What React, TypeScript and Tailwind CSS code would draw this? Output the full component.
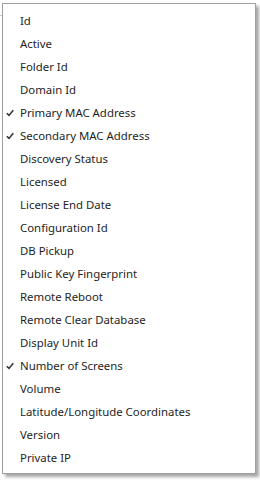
import React from "react";

const items: [string, boolean][] = [
  ["Id", false],
  ["Active", false],
  ["Folder Id", false],
  ["Domain Id", false],
  ["Primary MAC Address", true],
  ["Secondary MAC Address", true],
  ["Discovery Status", false],
  ["Licensed", false],
  ["License End Date", false],
  ["Configuration Id", false],
  ["DB Pickup", false],
  ["Public Key Fingerprint", false],
  ["Remote Reboot", false],
  ["Remote Clear Database", false],
  ["Display Unit Id", false],
  ["Number of Screens", true],
  ["Volume", false],
  ["Latitude/Longitude Coordinates", false],
  ["Version", false],
  ["Private IP", false],
];

function Check() {
  return (
    <svg width="8" height="8" viewBox="0 0 8 8" className="absolute left-[3px] top-[8px]">
      <path d="M0.8 4.2 L3 6.4 L7.3 1.2" fill="none" stroke="#333" strokeWidth="1.6" />
    </svg>
  );
}

export default function App() {
  return (
    <div className="relative w-[260px] h-[480px] bg-white overflow-hidden">
      <div className="absolute left-0 top-[15px] w-[3px] h-px bg-[#c8c8c8]" />
      <div className="absolute left-[2px] top-[3px] w-[254px] h-[471px] border border-[#a0a0a0] bg-white pt-[5px] pb-[4px] shadow-[3px_3px_3px_rgba(0,0,0,0.35)] font-['Segoe_UI','Noto_Sans',sans-serif] text-[11.4px] text-[#1e1e1e]">
        {items.map(([label, checked]) => (
          <div key={label} className="relative h-[23px] flex items-center pl-[17px] leading-none">
            {checked && <Check />}
            <span>{label}</span>
          </div>
        ))}
      </div>
    </div>
  );
}
